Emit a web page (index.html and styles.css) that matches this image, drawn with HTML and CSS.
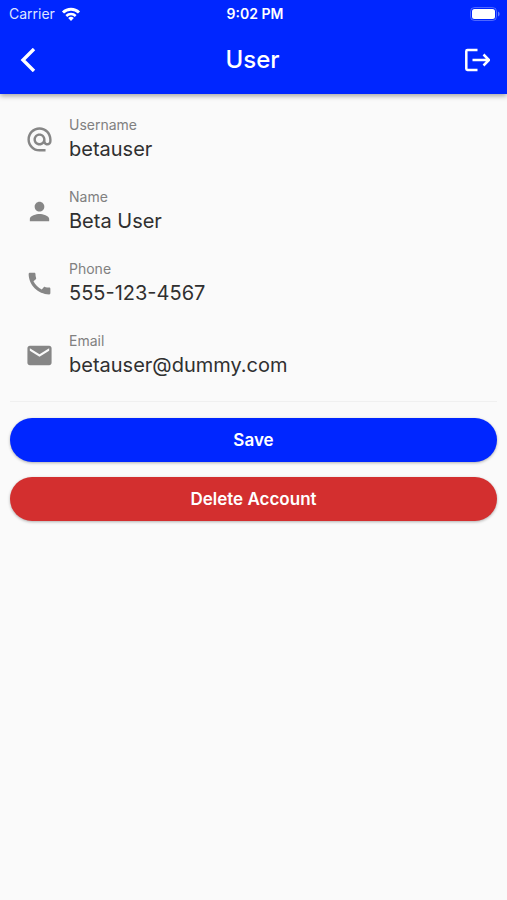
FILE: index.html
```html
<!DOCTYPE html>
<html lang="en">
<head>
<meta charset="utf-8">
<meta name="viewport" content="width=device-width, initial-scale=1.0">
<title>User</title>
<link rel="stylesheet" href="styles.css">
</head>
<body>
<header class="top">
  <div class="status-bar">
    <div class="carrier">
      <span>Carrier</span>
      <svg width="20" height="14" viewBox="0 0 20 14" fill="none" stroke="#fff" stroke-width="3">
        <path d="M2 5.5A11.5 11.5 0 0 1 18 5.5"/>
        <path d="M5.3 9A6.7 6.7 0 0 1 14.7 9" stroke-width="2.5"/>
        <path d="M10 14L7.2 11.1A4 4 0 0 1 12.8 11.1Z" fill="#fff" stroke="none"/>
      </svg>
    </div>
    <time class="clock">9:02 PM</time>
    <svg class="battery" width="31" height="14" viewBox="0 0 31 14">
      <rect x="0.5" y="0.5" width="26" height="13" rx="4" fill="none" stroke="#fff" stroke-opacity="0.3"/>
      <rect x="2" y="2" width="23" height="10" rx="2.5" fill="#fff"/>
      <path d="M28 4.5A2.7 2.7 0 0 1 28 9.5Z" fill="#fff" fill-opacity="0.4"/>
    </svg>
  </div>
  <div class="app-bar">
    <button type="button" class="icon-button" aria-label="Back">
      <svg width="16" height="24" viewBox="0 0 16 24" fill="none" stroke="#fff" stroke-width="3.4">
        <path d="M14 1L3 12L14 23"/>
      </svg>
    </button>
    <h1>User</h1>
    <button type="button" class="icon-button" aria-label="Log out">
      <svg width="26" height="24" viewBox="0 0 26 24" fill="none" stroke="#fff" stroke-width="2.5">
        <path d="M13.5 2H3.5Q2.3 2 2.3 3.2V20.8Q2.3 22 3.5 22H13.5"/>
        <path d="M8.5 12H25M19.5 6.5L25 12L19.5 17.5"/>
      </svg>
    </button>
  </div>
</header>
<main>
  <form>
    <div class="field">
      <svg viewBox="0 0 24 24"><path d="M12 1.95c-5.52 0-10 4.48-10 10s4.48 10 10 10h5v-2h-5c-4.34 0-8-3.66-8-8s3.66-8 8-8 8 3.66 8 8v1.43c0 .79-.71 1.57-1.5 1.57s-1.5-.78-1.5-1.57v-1.43c0-2.76-2.24-5-5-5s-5 2.24-5 5 2.24 5 5 5c1.38 0 2.64-.56 3.54-1.47.65.89 1.77 1.47 2.96 1.47 1.97 0 3.5-1.6 3.5-3.57v-1.43c0-5.52-4.48-10-10-10zm0 13c-1.66 0-3-1.34-3-3s1.34-3 3-3 3 1.34 3 3-1.34 3-3 3z"/></svg>
      <div class="field-text">
        <label for="username">Username</label>
        <input id="username" type="text" value="betauser">
      </div>
    </div>
    <div class="field">
      <svg viewBox="0 0 24 24"><path d="M12 12c2.21 0 4-1.79 4-4s-1.79-4-4-4-4 1.79-4 4 1.79 4 4 4zm0 2c-2.67 0-8 1.34-8 4v2h16v-2c0-2.66-5.33-4-8-4z"/></svg>
      <div class="field-text">
        <label for="name">Name</label>
        <input id="name" type="text" value="Beta User">
      </div>
    </div>
    <div class="field">
      <svg viewBox="0 0 24 24"><path d="M20.01 15.38c-1.23 0-2.42-.2-3.53-.56-.35-.12-.74-.03-1.01.24l-1.57 1.97c-2.83-1.35-5.48-3.9-6.89-6.83l1.95-1.66c.27-.28.35-.67.24-1.02-.37-1.11-.56-2.3-.56-3.53 0-.54-.45-.99-.99-.99H4.19C3.65 3 3 3.24 3 3.99 3 13.28 10.73 21 20.01 21c.71 0 .99-.63.99-1.18v-3.45c0-.54-.45-.99-.99-.99z"/></svg>
      <div class="field-text">
        <label for="phone">Phone</label>
        <input id="phone" type="tel" value="555-123-4567">
      </div>
    </div>
    <div class="field">
      <svg viewBox="0 0 24 24"><path d="M20 4H4c-1.1 0-1.99.9-1.99 2L2 18c0 1.1.9 2 2 2h16c1.1 0 2-.9 2-2V6c0-1.1-.9-2-2-2zm0 4l-8 5-8-5V6l8 5 8-5v2z"/></svg>
      <div class="field-text">
        <label for="email">Email</label>
        <input id="email" type="email" value="betauser@dummy.com">
      </div>
    </div>
    <hr>
    <div class="actions">
      <button type="submit" class="button save">Save</button>
      <button type="button" class="button delete">Delete Account</button>
    </div>
  </form>
</main>
</body>
</html>
```

FILE: styles.css
```css
* {
  box-sizing: border-box;
}
body {
  margin: 0;
  min-height: 100vh;
  background: #fafafa;
  color: #303030;
  font-family: Inter, "Liberation Sans", sans-serif;
}
button, input {
  font-family: inherit;
  border: none;
}
button {
  cursor: pointer;
}
.top {
  padding-bottom: 1px;
  background: #0026ff;
  color: white;
  box-shadow: 0 2px 5px rgba(0, 0, 0, 0.35);
}
.status-bar {
  display: grid;
  grid-template-columns: 1fr auto 1fr;
  align-items: center;
  height: 27px;
  padding: 0 6px 0 9px;
  font-size: 14px;
}
.carrier {
  display: flex;
  align-items: center;
  gap: 6px;
  color: #dfe4ff;
}
.clock {
  font-weight: 600;
}
.battery {
  justify-self: end;
}
.app-bar {
  display: flex;
  align-items: center;
  justify-content: space-between;
  height: 66px;
  padding: 0 10px 0 8px;
}
.app-bar h1 {
  margin: 0;
  font-size: 24px;
  font-weight: 500;
  line-height: 32px;
}
.icon-button {
  display: flex;
  align-items: center;
  justify-content: center;
  width: 40px;
  height: 40px;
  padding: 0;
  background: none;
}
form {
  padding: 9px 10px;
}
.field {
  display: flex;
  align-items: center;
  gap: 15px;
  height: 72px;
  padding: 0 15px;
}
.field svg {
  flex: none;
  width: 29px;
  height: 29px;
  fill: #868686;
}
.field-text {
  flex: 1;
  display: flex;
  flex-direction: column;
  min-width: 0;
}
.field label {
  color: #808080;
  font-size: 14px;
  line-height: 20px;
}
.field input {
  width: 100%;
  height: 28px;
  padding: 0;
  background: none;
  color: inherit;
  font-size: 20px;
  outline: none;
}
hr {
  height: 1px;
  margin: 10px 0 16px;
  border: none;
  background: #f0f0f0;
}
.actions {
  display: flex;
  flex-direction: column;
  gap: 15px;
}
.button {
  height: 44px;
  border-radius: 22px;
  color: white;
  font-size: 17px;
  font-weight: 600;
  box-shadow: 0 1px 3px rgba(0, 0, 0, 0.3);
}
.save {
  background: #0026ff;
}
.delete {
  background: #d32f2f;
}
```
